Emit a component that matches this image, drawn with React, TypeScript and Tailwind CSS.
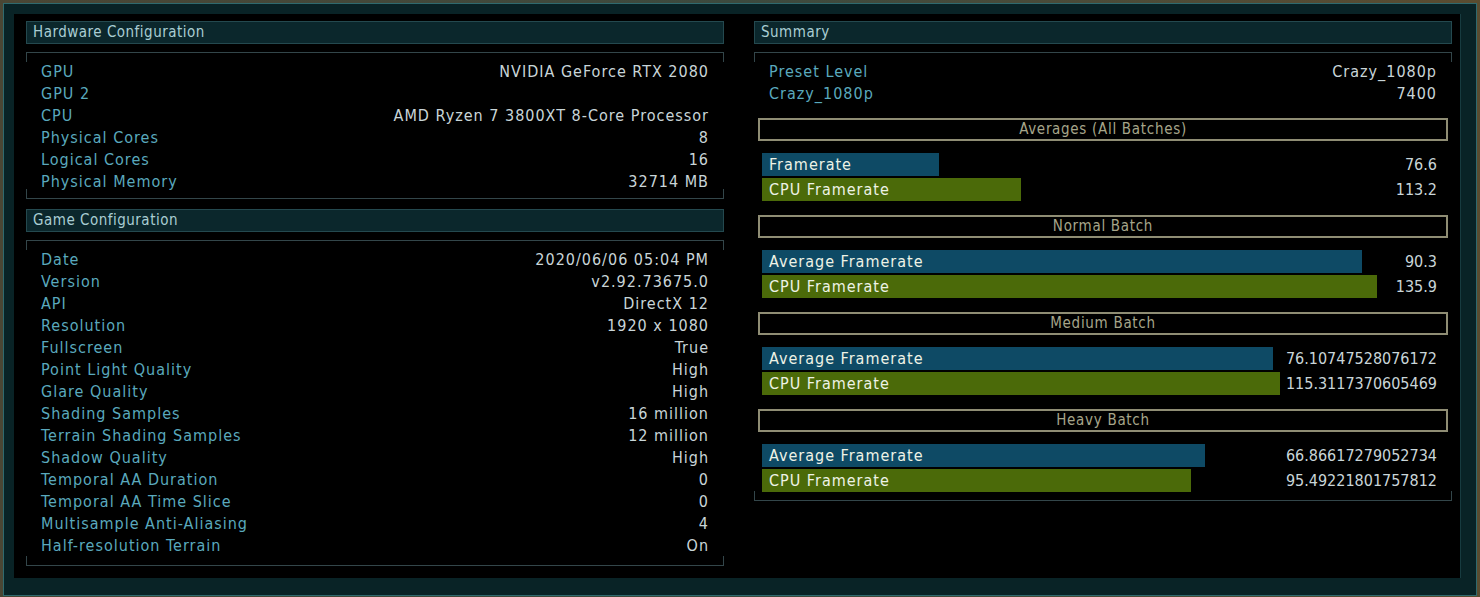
import React from 'react';

const hardware: [string, string][] = [
  ['GPU', 'NVIDIA GeForce RTX 2080'],
  ['GPU 2', ''],
  ['CPU', 'AMD Ryzen 7 3800XT 8-Core Processor'],
  ['Physical Cores', '8'],
  ['Logical Cores', '16'],
  ['Physical Memory', '32714 MB'],
];

const game: [string, string][] = [
  ['Date', '2020/06/06 05:04 PM'],
  ['Version', 'v2.92.73675.0'],
  ['API', 'DirectX 12'],
  ['Resolution', '1920 x 1080'],
  ['Fullscreen', 'True'],
  ['Point Light Quality', 'High'],
  ['Glare Quality', 'High'],
  ['Shading Samples', '16 million'],
  ['Terrain Shading Samples', '12 million'],
  ['Shadow Quality', 'High'],
  ['Temporal AA Duration', '0'],
  ['Temporal AA Time Slice', '0'],
  ['Multisample Anti-Aliasing', '4'],
  ['Half-resolution Terrain', 'On'],
];

const batches = [
  {
    title: 'Averages (All Batches)',
    bars: [
      { label: 'Framerate', value: '76.6', w: 'w-[177px]', gpu: true },
      { label: 'CPU Framerate', value: '113.2', w: 'w-[259px]', gpu: false },
    ],
  },
  {
    title: 'Normal Batch',
    bars: [
      { label: 'Average Framerate', value: '90.3', w: 'w-[600px]', gpu: true },
      { label: 'CPU Framerate', value: '135.9', w: 'w-[615px]', gpu: false },
    ],
  },
  {
    title: 'Medium Batch',
    bars: [
      { label: 'Average Framerate', value: '76.10747528076172', w: 'w-[511px]', gpu: true },
      { label: 'CPU Framerate', value: '115.3117370605469', w: 'w-[518px]', gpu: false },
    ],
  },
  {
    title: 'Heavy Batch',
    bars: [
      { label: 'Average Framerate', value: '66.86617279052734', w: 'w-[443px]', gpu: true },
      { label: 'CPU Framerate', value: '95.49221801757812', w: 'w-[429px]', gpu: false },
    ],
  },
];

function Header({ title }: { title: string }) {
  return (
    <div className="h-[23px] bg-[#0b272c] border border-[#24494f] pl-[6px] flex items-center text-[15px] tracking-[0.5px] text-[#a9cdd3]">
      {title}
    </div>
  );
}

// thin box: lines top and bottom, short ticks at the corners
function Box({ children, className }: { children: React.ReactNode; className?: string }) {
  return (
    <div className={'relative border-t border-b border-[#33464a] ' + (className ?? '')}>
      <span className="absolute left-0 top-0 w-px h-[9px] bg-[#33464a]" />
      <span className="absolute right-0 top-0 w-px h-[9px] bg-[#33464a]" />
      <span className="absolute left-0 bottom-0 w-px h-[9px] bg-[#33464a]" />
      <span className="absolute right-0 bottom-0 w-px h-[9px] bg-[#33464a]" />
      {children}
    </div>
  );
}

function Row({ label, value }: { label: string; value: string }) {
  return (
    <div className="h-[22px] flex items-center justify-between tracking-[1px]">
      <span className="text-[#5aa9bd]">{label}</span>
      <span className="text-[#c9d5d8]">{value}</span>
    </div>
  );
}

export default function App() {
  return (
    <div
      className="w-[1480px] h-[597px] bg-gradient-to-r from-[#4a4634] via-[#3c4a3e] to-[#5a4c30] pt-[3px] px-[3px] pb-[1px] overflow-hidden"
      style={{ fontFamily: '"DejaVu Sans Condensed", "DejaVu Sans", sans-serif', fontStretch: 'condensed' }}
    >
      <div className="h-full bg-[#092326] border border-[#2f6a6e] pt-[10px] pl-[10px] pr-[15px] pb-[17px]">
        <div className="h-full bg-black border-r border-[#173b3f] flex gap-[30px] pl-[12px] pt-[7px] pr-[7px] text-[16px]">
          {/* left column */}
          <div className="w-[698px] flex flex-col">
            <Header title="Hardware Configuration" />
            <Box className="mt-[8px] pt-[8px] pb-[5px] px-[15px]">
              {hardware.map(([l, v]) => (
                <Row key={l} label={l} value={v} />
              ))}
            </Box>
            <div className="mt-[10px]">
              <Header title="Game Configuration" />
            </div>
            <Box className="mt-[8px] pt-[8px] pb-[8px] px-[15px]">
              {game.map(([l, v]) => (
                <Row key={l} label={l} value={v} />
              ))}
            </Box>
          </div>

          {/* right column */}
          <div className="w-[698px] flex flex-col">
            <Header title="Summary" />
            <Box className="mt-[8px] pt-[8px] pb-[8px]">
              <div className="px-[15px]">
                <Row label="Preset Level" value="Crazy_1080p" />
                <Row label="Crazy_1080p" value="7400" />
              </div>
              {batches.map((b, i) => (
                <div key={b.title} className={i === 0 ? 'mt-[13px]' : 'mt-[14px]'}>
                  <div className="mx-[4px] h-[23px] border-2 border-[#8f8d74] flex items-center justify-center text-[15px] tracking-[0.7px] text-[#a6a58a]">
                    {b.title}
                  </div>
                  <div className="mt-[12px] flex flex-col gap-[2px]">
                    {b.bars.map((bar) => (
                      <div key={bar.label} className="h-[23px] flex items-center pl-[8px] pr-[15px]">
                        <div
                          className={
                            'h-full flex items-center pl-[7px] whitespace-nowrap tracking-[1px] text-[#eef3e6] ' +
                            bar.w +
                            (bar.gpu ? ' bg-[#0e4a65]' : ' bg-[#4b6a09]')
                          }
                        >
                          {bar.label}
                        </div>
                        <div className="flex-1 text-right text-[#c9d5d8]">{bar.value}</div>
                      </div>
                    ))}
                  </div>
                </div>
              ))}
            </Box>
          </div>
        </div>
      </div>
    </div>
  );
}
